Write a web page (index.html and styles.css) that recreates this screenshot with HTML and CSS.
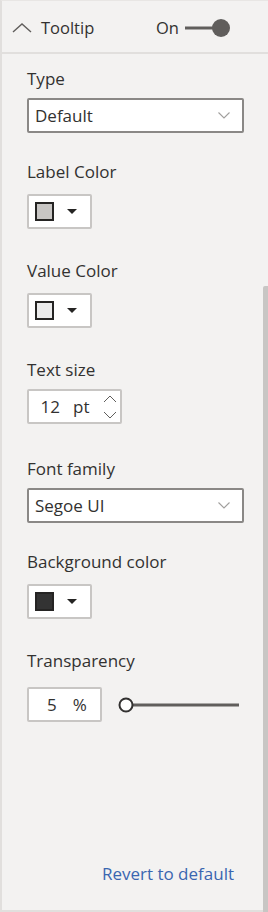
FILE: index.html
```html
<!DOCTYPE html>
<html>
<head>
<meta charset="utf-8">
<link rel="stylesheet" href="styles.css">
</head>
<body>
<div class="pane">
  <header class="head">
    <svg class="chev-up" width="20" height="10" viewBox="0 0 20 10"><polyline points="1,9 10,1 19,9"/></svg>
    <span class="title">Tooltip</span>
    <span class="on">On</span>
    <svg class="toggle" width="45" height="18" viewBox="0 0 45 18"><line x1="0" y1="9" x2="32" y2="9"/><circle cx="36" cy="9" r="9"/></svg>
  </header>
  <div class="body">
    <div class="field">
      <div class="label">Type</div>
      <div class="select"><span>Default</span><svg class="chev-down" width="12" height="7" viewBox="0 0 12 7"><polyline points="0.5,0.5 6,6 11.5,0.5"/></svg></div>
    </div>
    <div class="field field-color">
      <div class="label">Label Color</div>
      <div class="colorbtn"><span class="swatch sw-label"></span><span class="caret"></span></div>
    </div>
    <div class="field field-color">
      <div class="label">Value Color</div>
      <div class="colorbtn"><span class="swatch sw-value"></span><span class="caret"></span></div>
    </div>
    <div class="field field-number">
      <div class="label">Text size</div>
      <div class="spin"><span class="num">12</span><span class="unit">pt</span><svg class="arrows" width="14" height="24" viewBox="0 0 14 24"><polyline points="1,7 7,1 13,7"/><polyline points="1,17 7,23 13,17"/></svg></div>
    </div>
    <div class="field">
      <div class="label">Font family</div>
      <div class="select"><span>Segoe UI</span><svg class="chev-down" width="12" height="7" viewBox="0 0 12 7"><polyline points="0.5,0.5 6,6 11.5,0.5"/></svg></div>
    </div>
    <div class="field field-color">
      <div class="label">Background color</div>
      <div class="colorbtn"><span class="swatch sw-bg"></span><span class="caret"></span></div>
    </div>
    <div class="field field-slider">
      <div class="label">Transparency</div>
      <div class="slider-row">
        <div class="pct"><span class="num">5</span><span class="unit">%</span></div>
        <svg class="slider" width="122" height="16" viewBox="0 0 122 16"><line x1="14" y1="8" x2="121" y2="8"/><circle cx="8" cy="8" r="6.5"/></svg>
      </div>
    </div>
  </div>
  <div class="foot"><a class="revert">Revert to default</a></div>
  <div class="scrollbar"></div>
</div>
</body>
</html>
```

FILE: styles.css
```css
* { box-sizing: border-box; }
html, body { margin: 0; padding: 0; }
body {
  background: #f3f2f1;
  font-family: "Segoe UI", "Open Sans", sans-serif;
  font-size: 17px;
  color: #323130;
}
.pane {
  position: relative;
  width: 268px;
  height: 912px;
  display: flex;
  flex-direction: column;
  background: #f3f2f1;
  border-left: 2px solid #e1dfdd;
  border-top: 1px solid #e8e6e4;
  border-bottom: 2px solid #e1dfdd;
}
.head {
  height: 53px;
  flex: none;
  display: flex;
  align-items: center;
  padding: 2px 38px 0 10px;
  border-bottom: 2px solid #e1dfdd;
  font-size: 16.5px;
}
.chev-up { fill: none; stroke: #605e5c; stroke-width: 1.4; margin-right: 9px; }
.title { flex: 1; line-height: 20px; }
.on { line-height: 20px; margin-right: 6px; }
.toggle line { stroke: #605e5c; stroke-width: 3; }
.toggle circle { fill: #605e5c; }
.body {
  flex: 1;
  padding: 15px 0 0 25px;
}
.label { line-height: 20px; height: 20px; margin-bottom: 9px; white-space: nowrap; }
.field { margin-bottom: 29px; }
.field-color { margin-bottom: 32px; }
.field-color .label { margin-bottom: 12px; }
.field-number { margin-bottom: 35px; }
.field-slider .label { margin-bottom: 16px; }
.select {
  width: 217px;
  height: 35px;
  background: #fff;
  border: 2px solid #8a8886;
  border-radius: 2px;
  display: flex;
  align-items: center;
  justify-content: space-between;
  padding: 0 12px 0 6px;
  line-height: 20px;
}
.chev-down { fill: none; stroke: #a19f9d; stroke-width: 1.1; }
.colorbtn {
  width: 65px;
  height: 35px;
  background: #fff;
  border: 2px solid #c8c6c4;
  border-radius: 2px;
  display: flex;
  align-items: center;
  padding-left: 6px;
}
.swatch {
  width: 19px;
  height: 19px;
  border: 2px solid #252423;
  margin-right: 13px;
}
.sw-label { background: #c8c6c4; }
.sw-value { background: #ebebeb; }
.sw-bg { background: #333333; }
.caret {
  width: 0; height: 0;
  border-left: 5px solid transparent;
  border-right: 5px solid transparent;
  border-top: 5px solid #252423;
}
.spin {
  width: 95px;
  height: 35px;
  background: #fff;
  border: 2px solid #c8c6c4;
  border-radius: 2px;
  display: flex;
  align-items: center;
  padding-left: 11px;
  line-height: 20px;
}
.spin .num { width: 20px; text-align: right; }
.spin .unit { margin-left: 13px; }
.arrows { margin-left: 14px; fill: none; stroke: #605e5c; stroke-width: 1; }
.slider-row { display: flex; align-items: center; gap: 16px; }
.pct {
  width: 75px;
  height: 35px;
  background: #fff;
  border: 2px solid #c8c6c4;
  border-radius: 2px;
  display: flex;
  align-items: center;
  padding-left: 18px;
  line-height: 20px;
}
.pct .unit { margin-left: 16px; }
.slider line { stroke: #605e5c; stroke-width: 3; }
.slider circle { fill: #fff; stroke: #323130; stroke-width: 2; }
.foot {
  flex: none;
  text-align: right;
  padding: 0 34px 26px 0;
  line-height: 20px;
}
.revert { color: #3a66b0; }
.scrollbar {
  position: absolute;
  right: 0;
  top: 285px;
  bottom: -2px;
  width: 5px;
  background: #c8c6c4;
  border-top-left-radius: 2px;
}
```
